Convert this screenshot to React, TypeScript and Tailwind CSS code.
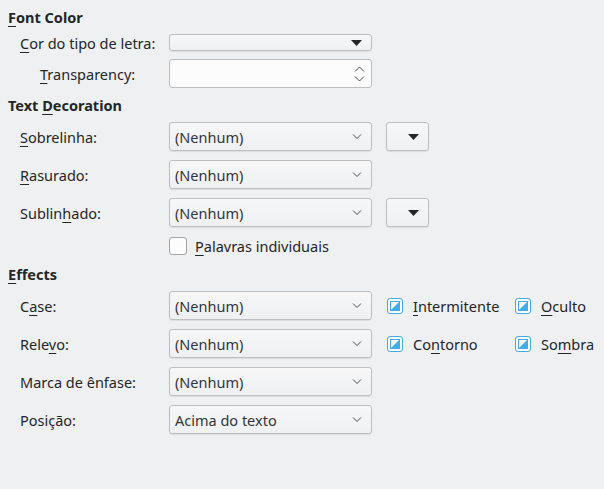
import React from "react";

const Chevron = () => (
  <svg width="10" height="6" viewBox="0 0 10 6" className="shrink-0">
    <path d="M1 0.5 L5 4.5 L9 0.5" fill="none" stroke="#4d4d4d" strokeWidth="1" />
  </svg>
);

const Triangle = () => (
  <svg width="11" height="6" viewBox="0 0 11 6">
    <path d="M0 0 H11 L5.5 6 Z" fill="#232627" />
  </svg>
);

const M = ({ children }: { children: React.ReactNode }) => (
  <span className="underline underline-offset-[3px] decoration-1">{children}</span>
);

const Select = ({ value }: { value: string }) => (
  <div className="w-[203px] h-full flex items-center justify-between pl-[5px] pr-[9px] border border-[#bcbebf] rounded-[3px] bg-gradient-to-b from-[#f7f7f8] to-[#eef0f1] shadow-[0_1px_1px_rgba(0,0,0,0.08)]">
    <span className="text-[#31363b]">{value}</span>
    <Chevron />
  </div>
);

const ColorBtn = () => (
  <div className="ml-[14px] w-[43px] h-full flex items-center justify-end pr-[9px] border border-[#bcbebf] rounded-[3px] bg-gradient-to-b from-[#f7f7f8] to-[#eef0f1] shadow-[0_1px_1px_rgba(0,0,0,0.08)]">
    <Triangle />
  </div>
);

// tri-state (partially checked) checkbox
const TriBox = () => (
  <svg width="16" height="16" viewBox="0 0 16 16" className="shrink-0">
    <rect x="0.5" y="0.5" width="15" height="15" rx="2.5" fill="#fcfcfc" stroke="#3daee9" />
    <rect x="3" y="3" width="10" height="10" fill="#3daee9" />
    <path d="M4 4 H12 L4 12 Z" fill="#fcfcfc" />
  </svg>
);

const Row = ({
  label,
  children,
  indent = "pl-[12px]",
  h = "h-[29px]",
  mt = "mt-[9px]",
}: {
  label: React.ReactNode;
  children: React.ReactNode;
  indent?: string;
  h?: string;
  mt?: string;
}) => (
  <div className={`flex items-center ${h} ${mt}`}>
    <div className={`w-[161px] shrink-0 ${indent}`}>{label}</div>
    <div className="flex items-center h-full">{children}</div>
  </div>
);

const Heading = ({ children, mt }: { children: React.ReactNode; mt: string }) => (
  <div className={`h-[18px] flex items-center font-bold ${mt}`}>{children}</div>
);

export default function App() {
  return (
    <div
      className="w-[604px] h-[489px] bg-[#eff0f1] text-[#232627] text-[14.5px] leading-[18px] pl-[8px] pt-[8px] overflow-hidden"
      style={{ fontFamily: '"Noto Sans", sans-serif' }}
    >
      <Heading mt="mt-0">
        <span>
          <M>F</M>ont Color
        </span>
      </Heading>
      <Row
        label={
          <span>
            <M>C</M>or do tipo de letra:
          </span>
        }
        h="h-[17px]"
        mt="mt-[8px]"
      >
        <div className="w-[203px] h-full flex items-center justify-end pr-[9px] border border-[#bcbebf] rounded-[3px] bg-gradient-to-b from-[#f7f7f8] to-[#eef0f1] shadow-[0_1px_1px_rgba(0,0,0,0.08)]">
          <Triangle />
        </div>
      </Row>
      <Row
        label={
          <span>
            <M>T</M>ransparency:
          </span>
        }
        indent="pl-[32px]"
        h="h-[29px]"
        mt="mt-[8px]"
      >
        <div className="w-[203px] h-full flex items-center justify-end pr-[6px] border border-[#bcbebf] rounded-[3px] bg-[#fcfcfc]">
          <svg width="11" height="16" viewBox="0 0 11 16">
            <path d="M1 5.5 L5.5 1 L10 5.5" fill="none" stroke="#4d4d4d" strokeWidth="1" />
            <path d="M1 10.5 L5.5 15 L10 10.5" fill="none" stroke="#4d4d4d" strokeWidth="1" />
          </svg>
        </div>
      </Row>

      <Heading mt="mt-[8px]">
        <span>
          Text <M>D</M>ecoration
        </span>
      </Heading>
      <Row
        label={
          <span>
            <M>S</M>obrelinha:
          </span>
        }
        mt="mt-[8px]"
      >
        <Select value="(Nenhum)" />
        <ColorBtn />
      </Row>
      <Row
        label={
          <span>
            <M>R</M>asurado:
          </span>
        }
      >
        <Select value="(Nenhum)" />
      </Row>
      <Row
        label={
          <span>
            Sublin<M>h</M>ado:
          </span>
        }
      >
        <Select value="(Nenhum)" />
        <ColorBtn />
      </Row>
      <div className="flex items-center h-[18px] mt-[10px] pl-[161px]">
        <div className="w-[18px] h-[18px] border border-[#a3a5a7] rounded-[3px] bg-[#fcfcfc]" />
        <span className="ml-[8px]">
          <M>P</M>alavras individuais
        </span>
      </div>

      <Heading mt="mt-[10px]">
        <span>
          <M>E</M>ffects
        </span>
      </Heading>
      <Row
        label={
          <span>
            C<M>a</M>se:
          </span>
        }
        mt="mt-[8px]"
      >
        <Select value="(Nenhum)" />
        <div className="flex items-center ml-[15px] w-[128px]">
          <TriBox />
          <span className="ml-[10px]">
            <M>I</M>ntermitente
          </span>
        </div>
        <div className="flex items-center">
          <TriBox />
          <span className="ml-[10px]">
            <M>O</M>culto
          </span>
        </div>
      </Row>
      <Row
        label={
          <span>
            Rele<M>v</M>o:
          </span>
        }
      >
        <Select value="(Nenhum)" />
        <div className="flex items-center ml-[15px] w-[128px]">
          <TriBox />
          <span className="ml-[10px]">
            Co<M>n</M>torno
          </span>
        </div>
        <div className="flex items-center">
          <TriBox />
          <span className="ml-[10px]">
            So<M>m</M>bra
          </span>
        </div>
      </Row>
      <Row label={<span>Marca de ênfase:</span>}>
        <Select value="(Nenhum)" />
      </Row>
      <Row label={<span>Posição:</span>}>
        <Select value="Acima do texto" />
      </Row>
    </div>
  );
}
